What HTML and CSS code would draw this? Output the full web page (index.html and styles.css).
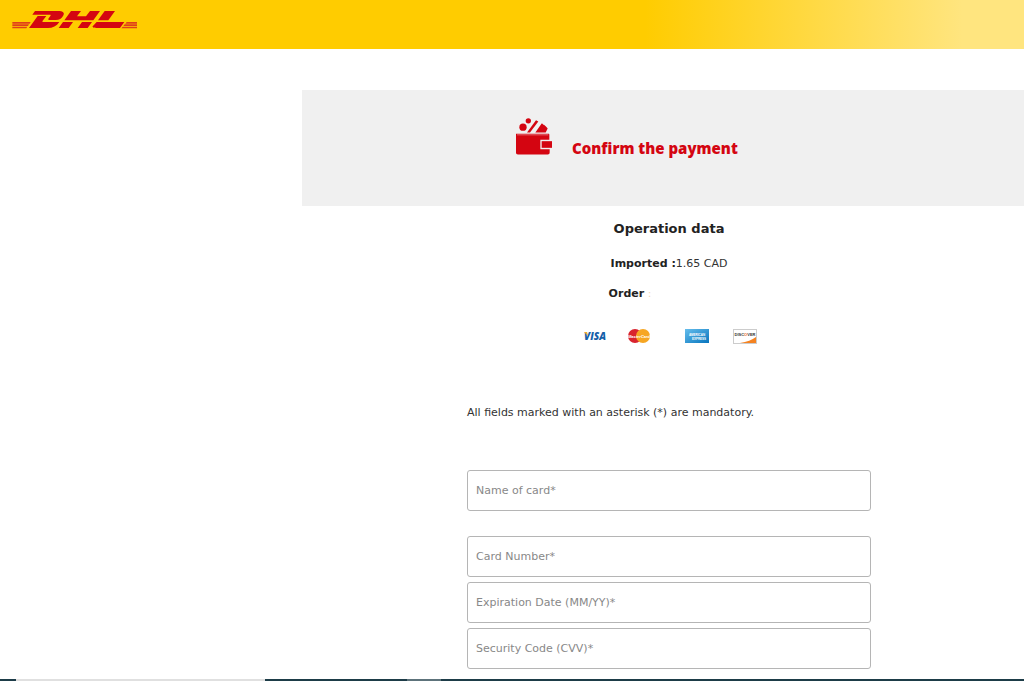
FILE: index.html
```html
<!DOCTYPE html>
<html lang="en">
<head>
    <meta charset="UTF-8">
    <meta name="viewport" content="width=device-width, initial-scale=1.0">
    <title>Confirm the payment</title>
    <link rel="stylesheet" href="styles.css">
</head>
<body>
    <header class="header">
        <svg class="logo" viewBox="36 30 378 57" role="img" aria-label="DHL">
            <g fill="#d40511">
                <path d="M105 33H172C191 33 195 39 189 48C184 56 179 60 167 60H148C144 60 144 58 146 55L151 48C153 45 152 44 149 44H97Z"/>
                <path d="M87 84L113 48H139L128 62C126 65 127 66 132 66H178C170 78 158 84 144 84Z"/>
                <path d="M213 33H243L231 49H258L270 33H300L280 61H193Z"/>
                <path d="M189 66H219L206 84H176ZM246 66H276L263 84H233Z"/>
                <path d="M314 33H345L325 61H294Z"/>
                <path d="M290 66H373L360 84H290C277 84 275 80 281 76Z"/>
            </g>
            <g fill="#e0401a">
                <path d="M37 66H92L89 71H37ZM37 73H87L84 78H37ZM37 80H82L79 85H37Z"/>
                <path d="M380 66H411V71H376ZM374 73H411V78H370ZM368 80H411V85H364Z"/>
            </g>
        </svg>
    </header>

    <main class="main">
        <div class="banner">
            <svg class="wallet" viewBox="0 0 108 110" aria-hidden="true">
                <g fill="#d40511">
                    <circle cx="37" cy="8" r="8"/>
                    <circle cx="21" cy="27" r="11"/>
                    <path d="M60 6L67 10L42 43H33Z"/>
                    <path d="M58 43L77 16C81 15 80 20 84 20C87 23 91 25 95 31L89 43Z"/>
                    <path d="M0 47H97C100 47 100 49 100 51V65H73V93H101V103C101 107 99 109 95 109H6C2 109 0 107 0 103Z"/>
                    <path d="M77 69H108V89H77Z"/>
                </g>
                <path d="M3 50H97" stroke="#f0a0a4" stroke-width="2"/>
            </svg>
            <h1>Confirm the payment</h1>
        </div>

        <div class="content">
            <section class="operation">
                <h2>Operation data</h2>
                <p><b>Imported :</b>1.65 CAD</p>
                <p class="order"><b>Order</b> <span>:</span></p>
            </section>

            <div class="cards">
                <svg class="card" viewBox="0 0 24 16" role="img" aria-label="Visa">
                    <text class="visa" x="12" y="12" text-anchor="middle">VISA</text>
                    <path d="M1 4H4L5 8Z" fill="#f0ae2e"/>
                </svg>
                <svg class="card" viewBox="0 0 24 16" role="img" aria-label="MasterCard">
                    <circle cx="8" cy="8" r="7" fill="#d9232e"/>
                    <circle cx="16" cy="8" r="7" fill="#f6a623"/>
                    <text class="mastercard" x="12" y="10" text-anchor="middle">MasterCard</text>
                </svg>
                <svg class="card card-amex" viewBox="0 0 24 16" role="img" aria-label="American Express">
                    <defs>
                        <linearGradient id="amex" x1="0" y1="0" x2="1" y2="1">
                            <stop offset="0" stop-color="#65bdec"/>
                            <stop offset="1" stop-color="#0875be"/>
                        </linearGradient>
                    </defs>
                    <rect y="1" width="24" height="14" fill="url(#amex)"/>
                    <text class="amex" x="12" y="8" text-anchor="middle">AMERICAN</text>
                    <text class="amex" x="14" y="12" text-anchor="middle">EXPRESS</text>
                </svg>
                <svg class="card" viewBox="0 0 24 16" role="img" aria-label="Discover">
                    <rect x="0.5" y="1.5" width="23" height="14" fill="#fff" stroke="#ccc"/>
                    <path d="M23 9V15H7C14 14 19 12 23 9Z" fill="#f58220"/>
                    <text class="discover" x="12" y="8" text-anchor="middle">DISC<tspan fill="#f26a21">O</tspan>VER</text>
                </svg>
            </div>

            <p class="note">All fields marked with an asterisk (*) are mandatory.</p>

            <div class="fields">
                <input class="field field-name" type="text" placeholder="Name of card*" aria-label="Name of card">
                <input class="field" type="text" placeholder="Card Number*" aria-label="Card Number">
                <input class="field" type="text" placeholder="Expiration Date (MM/YY)*" aria-label="Expiration Date">
                <input class="field" type="text" placeholder="Security Code (CVV)*" aria-label="Security Code">
            </div>
        </div>
    </main>

    <div class="bottom-bar"></div>
</body>
</html>
```
FILE: styles.css
```css
* {
    box-sizing: border-box;
}

body {
    margin: 0;
    min-height: 100vh;
    display: flex;
    flex-direction: column;
    font-family: "DejaVu Sans", Verdana, sans-serif;
    font-size: 11px;
    color: #333;
    background-color: #fff;
}

h1, h2, p {
    margin: 0;
}

.header {
    height: 49px;
    padding: 10px 12px;
    background: linear-gradient(90deg, #fc0 0%, #fc0 63%, #ffe57f 94%, #ffe57f 100%);
}

.logo {
    display: block;
    width: 126px;
    height: 19px;
}

.main {
    margin-left: 302px;
    padding-top: 41px;
}

.banner {
    display: flex;
    gap: 20px;
    height: 116px;
    padding: 28px 0 0 214px;
    background-color: #f0f0f0;
}

.wallet {
    width: 36px;
    height: 37px;
}

.banner h1 {
    padding-top: 20px;
    font-family: "Open Sans", "Arial Black", sans-serif;
    font-size: 15px;
    font-weight: 800;
    line-height: 20px;
    color: #d40511;
}

.content {
    max-width: 569px;
    padding-left: 165px;
}

.operation {
    text-align: center;
    line-height: 20px;
}

.operation h2 {
    padding-top: 13px;
    margin-bottom: 15px;
    font-size: 13px;
    line-height: 20px;
    color: #222;
}

.operation p {
    margin-bottom: 10px;
}

.operation b {
    color: #222;
}

.order {
    padding-right: 78px;
}

.order span {
    color: #f3d9bd;
}

.cards {
    display: flex;
    gap: 20px;
    margin-top: 24px;
    padding-left: 116px;
}

.card {
    width: 24px;
    height: 16px;
}

.card-amex {
    margin: 0 4px 0 14px;
}

.card text {
    font-family: "Liberation Sans", Arial, sans-serif;
    font-weight: bold;
}

.card .visa {
    font-family: "Open Sans", sans-serif;
    font-size: 10px;
    font-weight: 800;
    font-style: italic;
    fill: #1560a8;
}

.card .mastercard {
    font-size: 4px;
    font-style: italic;
    fill: #fff;
}

.card .amex {
    font-size: 3px;
    fill: #fff;
}

.card .discover {
    font-size: 4px;
    fill: #333;
}

.note {
    margin-top: 59px;
    line-height: 20px;
}

.fields {
    display: flex;
    flex-direction: column;
    gap: 5px;
    margin-top: 47px;
}

.field {
    width: 100%;
    height: 41px;
    padding: 0 8px;
    border: 1px solid #b5b5b5;
    border-radius: 3px;
    font-family: inherit;
    font-size: 11px;
    color: #333;
    background-color: #fff;
}

.field::placeholder {
    color: #888;
    opacity: 1;
}

.field-name {
    margin-bottom: 20px;
}

.bottom-bar {
    height: 2px;
    margin-top: auto;
    background: linear-gradient(90deg, #1d3c48 16px, #e0e0e0 16px, #e0e0e0 265px, #1d3c48 265px, #1d3c48 407px, #5d737b 407px, #5d737b 441px, #1d3c48 441px);
}
```
